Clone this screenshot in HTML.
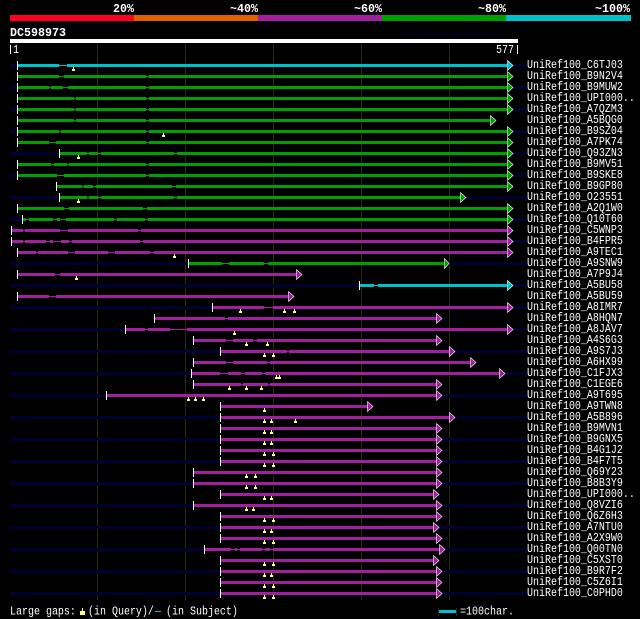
<!DOCTYPE html>
<html><head><meta charset="utf-8"><style>
html,body{margin:0;padding:0;background:#000;width:640px;height:619px;overflow:hidden}
svg{display:block}
text{font-family:"Liberation Mono","DejaVu Sans Mono",monospace;font-size:10px;fill:#fff;transform-box:fill-box;transform-origin:0 100%;transform:scaleY(1.2)}
.h{font-size:11.67px;font-weight:bold;transform:none}
.n{fill:none;stroke:#000033;stroke-width:3}
.w{fill:none;stroke:#fff;stroke-width:1}
.m{fill:#ffff80}
.tc,.bc{stroke:#00c0cc;fill:none}.tg,.bg{stroke:#00a000;fill:none}.tp,.bp{stroke:#a020a0;fill:none}
.tc,.tg,.tp{stroke-width:1}.bc,.bg,.bp{stroke-width:3}
.ac,.ag,.ap{stroke:#fff;stroke-width:.6}.ac{fill:#00c0cc}.ag{fill:#00a000}.ap{fill:#a020a0}
</style></head><body>
<svg width="640" height="619" viewBox="0 0 640 619" xmlns="http://www.w3.org/2000/svg">
<rect width="640" height="619" fill="#000"/>
<text class="h" x="113" y="12">20%</text>
<text class="h" x="230" y="12">~40%</text>
<text class="h" x="354" y="12">~60%</text>
<text class="h" x="478" y="12">~80%</text>
<text class="h" x="595" y="12">~100%</text>
<rect x="10" y="15" width="124" height="6" fill="#ff0022"/>
<rect x="134" y="15" width="124" height="6" fill="#e06000"/>
<rect x="258" y="15" width="124" height="6" fill="#a020a0"/>
<rect x="382" y="15" width="124" height="6" fill="#00a000"/>
<rect x="506" y="15" width="125" height="6" fill="#00c0cc"/>
<text class="h" x="10" y="36">DC598973</text>
<text class="h" x="402" y="37" style="font-size:8.3px;font-weight:normal;fill:#000033">AlignView.pm Beta rel.7</text>
<rect x="10" y="39" width="508" height="4" fill="#fff"/>
<rect x="10" y="45" width="1" height="9" fill="#fff"/>
<text x="13" y="53.500">1</text>
<text x="496" y="53.500">577</text>
<rect x="517" y="45" width="1" height="9" fill="#fff"/>
<path d="M97.5 44V600M185.5 44V600M273.5 44V600M361.5 44V600M449.5 44V600" stroke="#2a2a10" stroke-width="1" fill="none"/>

<g transform="translate(0,65)"><path class="n" d="M10 .5H17M513 .5H527"/><path class="tc" d="M18 .5H507"/><path class="bc" d="M18 .5H59M67 .5H507"/><path class="w" d="M17.500 -4V5"/><polygon class="ac" points="507.500,-4.500 507.500,5.500 513,.5"/><path class="m" d="M73 2h1v2h1v2h-3v-2h1z"/><text x="527" y="3.500">UniRef100_C6TJ03</text></g>
<g transform="translate(0,76)"><path class="tg" d="M18 .5H507"/><path class="bg" d="M18 .5H59M64 .5H146M149 .5H507"/><path class="w" d="M17.500 -4V5"/><polygon class="ag" points="507.500,-4.500 507.500,5.500 513,.5"/><text x="527" y="3.500">UniRef100_B9N2V4</text></g>
<g transform="translate(0,87)"><path class="n" d="M10 .5H17M513 .5H527"/><path class="tg" d="M18 .5H507"/><path class="bg" d="M18 .5H49M51 .5H63M68 .5H146M149 .5H507"/><path class="w" d="M17.500 -4V5"/><polygon class="ag" points="507.500,-4.500 507.500,5.500 513,.5"/><text x="527" y="3.500">UniRef100_B9MUW2</text></g>
<g transform="translate(0,98)"><path class="tg" d="M18 .5H507"/><path class="bg" d="M18 .5H74M76 .5H146M149 .5H507"/><path class="w" d="M17.500 -4V5"/><polygon class="ag" points="507.500,-4.500 507.500,5.500 513,.5"/><text x="527" y="3.500">UniRef100_UPI000..</text></g>
<g transform="translate(0,109)"><path class="n" d="M10 .5H17M513 .5H527"/><path class="tg" d="M18 .5H507"/><path class="bg" d="M18 .5H74M76 .5H146M149 .5H507"/><path class="w" d="M17.500 -4V5"/><polygon class="ag" points="507.500,-4.500 507.500,5.500 513,.5"/><text x="527" y="3.500">UniRef100_A7QZM3</text></g>
<g transform="translate(0,120)"><path class="tg" d="M18 .5H490"/><path class="bg" d="M18 .5H74M76 .5H146M149 .5H490"/><path class="w" d="M17.500 -4V5"/><polygon class="ag" points="490.500,-4.500 490.500,5.500 496,.5"/><text x="527" y="3.500">UniRef100_A5BQG0</text></g>
<g transform="translate(0,131)"><path class="n" d="M10 .5H17M513 .5H527"/><path class="tg" d="M18 .5H507"/><path class="bg" d="M18 .5H59M61 .5H146M149 .5H507"/><path class="w" d="M17.500 -4V5"/><polygon class="ag" points="507.500,-4.500 507.500,5.500 513,.5"/><path class="m" d="M163 2h1v2h1v2h-3v-2h1z"/><text x="527" y="3.500">UniRef100_B9SZ04</text></g>
<g transform="translate(0,142)"><path class="tg" d="M18 .5H507"/><path class="bg" d="M18 .5H49M56 .5H146M149 .5H507"/><path class="w" d="M17.500 -4V5"/><polygon class="ag" points="507.500,-4.500 507.500,5.500 513,.5"/><text x="527" y="3.500">UniRef100_A7PK74</text></g>
<g transform="translate(0,153)"><path class="n" d="M10 .5H59M513 .5H527"/><path class="tg" d="M60 .5H507"/><path class="bg" d="M60 .5H87M89 .5H98M101 .5H174M177 .5H507"/><path class="w" d="M59.500 -4V5"/><polygon class="ag" points="507.500,-4.500 507.500,5.500 513,.5"/><path class="m" d="M78 2h1v2h1v2h-3v-2h1z"/><text x="527" y="3.500">UniRef100_Q93ZN3</text></g>
<g transform="translate(0,164)"><path class="tg" d="M18 .5H507"/><path class="bg" d="M18 .5H51M54 .5H67M69 .5H146M149 .5H507"/><path class="w" d="M17.500 -4V5"/><polygon class="ag" points="507.500,-4.500 507.500,5.500 513,.5"/><text x="527" y="3.500">UniRef100_B9MV51</text></g>
<g transform="translate(0,175)"><path class="n" d="M10 .5H17M513 .5H527"/><path class="tg" d="M18 .5H507"/><path class="bg" d="M18 .5H57M64 .5H146M149 .5H507"/><path class="w" d="M17.500 -4V5"/><polygon class="ag" points="507.500,-4.500 507.500,5.500 513,.5"/><text x="527" y="3.500">UniRef100_B9SKE8</text></g>
<g transform="translate(0,186)"><path class="tg" d="M57 .5H507"/><path class="bg" d="M57 .5H82M84 .5H93M96 .5H172M176 .5H507"/><path class="w" d="M56.500 -4V5"/><polygon class="ag" points="507.500,-4.500 507.500,5.500 513,.5"/><text x="527" y="3.500">UniRef100_B9GP80</text></g>
<g transform="translate(0,197)"><path class="n" d="M10 .5H59M466 .5H527"/><path class="tg" d="M60 .5H461"/><path class="bg" d="M60 .5H87M89 .5H98M101 .5H174M177 .5H461"/><path class="w" d="M59.500 -4V5"/><polygon class="ag" points="460.500,-4.500 460.500,5.500 466,.5"/><path class="m" d="M78 2h1v2h1v2h-3v-2h1z"/><text x="527" y="3.500">UniRef100_O23551</text></g>
<g transform="translate(0,208)"><path class="tg" d="M18 .5H507"/><path class="bg" d="M18 .5H64M69 .5H143M147 .5H507"/><path class="w" d="M17.500 -4V5"/><polygon class="ag" points="507.500,-4.500 507.500,5.500 513,.5"/><text x="527" y="3.500">UniRef100_A2Q1W0</text></g>
<g transform="translate(0,219)"><path class="n" d="M10 .5H22M513 .5H527"/><path class="tg" d="M23 .5H507"/><path class="bg" d="M23 .5H26M29 .5H53M57 .5H60M66 .5H114M117 .5H145M148 .5H507"/><path class="w" d="M22.500 -4V5"/><polygon class="ag" points="507.500,-4.500 507.500,5.500 513,.5"/><text x="527" y="3.500">UniRef100_Q10T60</text></g>
<g transform="translate(0,230)"><path class="tp" d="M12 .5H507"/><path class="bp" d="M12 .5H23M25 .5H60M68 .5H138M141 .5H507"/><path class="w" d="M11.500 -4V5"/><polygon class="ap" points="507.500,-4.500 507.500,5.500 513,.5"/><text x="527" y="3.500">UniRef100_C5WNP3</text></g>
<g transform="translate(0,241)"><path class="n" d="M513 .5H527"/><path class="tp" d="M12 .5H507"/><path class="bp" d="M12 .5H23M25 .5H46M50 .5H53M61 .5H69M72 .5H140M143 .5H507"/><path class="w" d="M11.500 -4V5"/><polygon class="ap" points="507.500,-4.500 507.500,5.500 513,.5"/><text x="527" y="3.500">UniRef100_B4FPR5</text></g>
<g transform="translate(0,252)"><path class="tp" d="M18 .5H507"/><path class="bp" d="M18 .5H36M38 .5H68M75 .5H108M115 .5H150M154 .5H507"/><path class="w" d="M17.500 -4V5"/><polygon class="ap" points="507.500,-4.500 507.500,5.500 513,.5"/><path class="m" d="M174 2h1v2h1v2h-3v-2h1z"/><text x="527" y="3.500">UniRef100_A9TEC1</text></g>
<g transform="translate(0,263)"><path class="n" d="M10 .5H188M449 .5H527"/><path class="tg" d="M189 .5H444"/><path class="bg" d="M189 .5H222M229 .5H264M268 .5H444"/><path class="w" d="M188.500 -4V5"/><polygon class="ag" points="444.500,-4.500 444.500,5.500 449,.5"/><text x="527" y="3.500">UniRef100_A9SNW9</text></g>
<g transform="translate(0,274)"><path class="tp" d="M18 .5H296"/><path class="bp" d="M18 .5H55M60 .5H296"/><path class="w" d="M17.500 -4V5"/><polygon class="ap" points="296.500,-4.500 296.500,5.500 302,.5"/><path class="m" d="M76 2h1v2h1v2h-3v-2h1z"/><text x="527" y="3.500">UniRef100_A7P9J4</text></g>
<g transform="translate(0,285)"><path class="n" d="M10 .5H359M513 .5H527"/><path class="tc" d="M360 .5H507"/><path class="bc" d="M360 .5H374M378 .5H507"/><path class="w" d="M359.500 -4V5"/><polygon class="ac" points="507.500,-4.500 507.500,5.500 513,.5"/><text x="527" y="3.500">UniRef100_A5BU58</text></g>
<g transform="translate(0,296)"><path class="tp" d="M18 .5H288"/><path class="bp" d="M18 .5H49M56 .5H288"/><path class="w" d="M17.500 -4V5"/><polygon class="ap" points="288.500,-4.500 288.500,5.500 294,.5"/><text x="527" y="3.500">UniRef100_A5BU59</text></g>
<g transform="translate(0,307)"><path class="n" d="M10 .5H212M513 .5H527"/><path class="tp" d="M213 .5H507"/><path class="bp" d="M213 .5H264M273 .5H507"/><path class="w" d="M212.500 -4V5"/><polygon class="ap" points="507.500,-4.500 507.500,5.500 513,.5"/><path class="m" d="M240 2h1v2h1v2h-3v-2h1zM284 2h1v2h1v2h-3v-2h1zM294 2h1v2h1v2h-3v-2h1z"/><text x="527" y="3.500">UniRef100_A8IMR7</text></g>
<g transform="translate(0,318)"><path class="tp" d="M155 .5H437"/><path class="bp" d="M155 .5H225M228 .5H437"/><path class="w" d="M154.500 -4V5"/><polygon class="ap" points="436.500,-4.500 436.500,5.500 442,.5"/><text x="527" y="3.500">UniRef100_A8HQN7</text></g>
<g transform="translate(0,329)"><path class="n" d="M10 .5H125M513 .5H527"/><path class="tp" d="M126 .5H507"/><path class="bp" d="M126 .5H145M148 .5H170M187 .5H507"/><path class="w" d="M125.500 -4V5"/><polygon class="ap" points="507.500,-4.500 507.500,5.500 513,.5"/><path class="m" d="M234 2h1v2h1v2h-3v-2h1z"/><text x="527" y="3.500">UniRef100_A8JAV7</text></g>
<g transform="translate(0,340)"><path class="tp" d="M194 .5H437"/><path class="bp" d="M194 .5H226M233 .5H253M257 .5H437"/><path class="w" d="M193.500 -4V5"/><polygon class="ap" points="436.500,-4.500 436.500,5.500 442,.5"/><path class="m" d="M246 2h1v2h1v2h-3v-2h1zM267 2h1v2h1v2h-3v-2h1z"/><text x="527" y="3.500">UniRef100_A4S6G3</text></g>
<g transform="translate(0,351)"><path class="n" d="M10 .5H220M454 .5H527"/><path class="tp" d="M221 .5H449"/><path class="bp" d="M221 .5H287M289 .5H449"/><path class="w" d="M220.500 -4V5"/><polygon class="ap" points="449.500,-4.500 449.500,5.500 455,.5"/><path class="m" d="M264 2h1v2h1v2h-3v-2h1zM273 2h1v2h1v2h-3v-2h1z"/><text x="527" y="3.500">UniRef100_A9S7J3</text></g>
<g transform="translate(0,362)"><path class="tp" d="M194 .5H470"/><path class="bp" d="M194 .5H226M233 .5H267M270 .5H470"/><path class="w" d="M193.500 -4V5"/><polygon class="ap" points="470.500,-4.500 470.500,5.500 476,.5"/><text x="527" y="3.500">UniRef100_A6HX99</text></g>
<g transform="translate(0,373)"><path class="n" d="M10 .5H191M505 .5H527"/><path class="tp" d="M192 .5H500"/><path class="bp" d="M192 .5H220M228 .5H241M245 .5H262M265 .5H500"/><path class="w" d="M191.500 -4V5"/><polygon class="ap" points="499.500,-4.500 499.500,5.500 505,.5"/><path class="m" d="M276 2h1v2h1v2h-3v-2h1zM279 2h1v2h1v2h-3v-2h1z"/><text x="527" y="3.500">UniRef100_C1FJX3</text></g>
<g transform="translate(0,384)"><path class="tp" d="M194 .5H437"/><path class="bp" d="M194 .5H241M243 .5H268M270 .5H437"/><path class="w" d="M193.500 -4V5"/><polygon class="ap" points="436.500,-4.500 436.500,5.500 442,.5"/><path class="m" d="M229 2h1v2h1v2h-3v-2h1zM246 2h1v2h1v2h-3v-2h1zM261 2h1v2h1v2h-3v-2h1z"/><text x="527" y="3.500">UniRef100_C1EGE6</text></g>
<g transform="translate(0,395)"><path class="n" d="M10 .5H106M442 .5H527"/><path class="bp" d="M107 .5H437"/><path class="w" d="M106.500 -4V5"/><polygon class="ap" points="436.500,-4.500 436.500,5.500 442,.5"/><path class="m" d="M188 2h1v2h1v2h-3v-2h1zM195 2h1v2h1v2h-3v-2h1zM203 2h1v2h1v2h-3v-2h1z"/><text x="527" y="3.500">UniRef100_A9T695</text></g>
<g transform="translate(0,406)"><path class="bp" d="M221 .5H368"/><path class="w" d="M220.500 -4V5"/><polygon class="ap" points="367.500,-4.500 367.500,5.500 373,.5"/><path class="m" d="M264 2h1v2h1v2h-3v-2h1z"/><text x="527" y="3.500">UniRef100_A9TWN8</text></g>
<g transform="translate(0,417)"><path class="n" d="M10 .5H220M454 .5H527"/><path class="bp" d="M221 .5H449"/><path class="w" d="M220.500 -4V5"/><polygon class="ap" points="449.500,-4.500 449.500,5.500 455,.5"/><path class="m" d="M264 2h1v2h1v2h-3v-2h1zM271 2h1v2h1v2h-3v-2h1zM295 2h1v2h1v2h-3v-2h1z"/><text x="527" y="3.500">UniRef100_A5B896</text></g>
<g transform="translate(0,428)"><path class="bp" d="M221 .5H437"/><path class="w" d="M220.500 -4V5"/><polygon class="ap" points="436.500,-4.500 436.500,5.500 442,.5"/><path class="m" d="M264 2h1v2h1v2h-3v-2h1zM271 2h1v2h1v2h-3v-2h1z"/><text x="527" y="3.500">UniRef100_B9MVN1</text></g>
<g transform="translate(0,439)"><path class="n" d="M10 .5H220M442 .5H527"/><path class="bp" d="M221 .5H437"/><path class="w" d="M220.500 -4V5"/><polygon class="ap" points="436.500,-4.500 436.500,5.500 442,.5"/><path class="m" d="M264 2h1v2h1v2h-3v-2h1zM271 2h1v2h1v2h-3v-2h1z"/><text x="527" y="3.500">UniRef100_B9GNX5</text></g>
<g transform="translate(0,450)"><path class="bp" d="M221 .5H437"/><path class="w" d="M220.500 -4V5"/><polygon class="ap" points="436.500,-4.500 436.500,5.500 442,.5"/><path class="m" d="M264 2h1v2h1v2h-3v-2h1zM273 2h1v2h1v2h-3v-2h1z"/><text x="527" y="3.500">UniRef100_B4G1J2</text></g>
<g transform="translate(0,461)"><path class="n" d="M10 .5H220M442 .5H527"/><path class="bp" d="M221 .5H437"/><path class="w" d="M220.500 -4V5"/><polygon class="ap" points="436.500,-4.500 436.500,5.500 442,.5"/><path class="m" d="M264 2h1v2h1v2h-3v-2h1zM273 2h1v2h1v2h-3v-2h1z"/><text x="527" y="3.500">UniRef100_B4F7T5</text></g>
<g transform="translate(0,472)"><path class="bp" d="M194 .5H437"/><path class="w" d="M193.500 -4V5"/><polygon class="ap" points="436.500,-4.500 436.500,5.500 442,.5"/><path class="m" d="M246 2h1v2h1v2h-3v-2h1zM255 2h1v2h1v2h-3v-2h1z"/><text x="527" y="3.500">UniRef100_Q69Y23</text></g>
<g transform="translate(0,483)"><path class="n" d="M10 .5H193M442 .5H527"/><path class="bp" d="M194 .5H437"/><path class="w" d="M193.500 -4V5"/><polygon class="ap" points="436.500,-4.500 436.500,5.500 442,.5"/><path class="m" d="M246 2h1v2h1v2h-3v-2h1zM255 2h1v2h1v2h-3v-2h1z"/><text x="527" y="3.500">UniRef100_B8B3Y9</text></g>
<g transform="translate(0,494)"><path class="bp" d="M221 .5H433"/><path class="w" d="M220.500 -4V5"/><polygon class="ap" points="433.500,-4.500 433.500,5.500 439,.5"/><path class="m" d="M264 2h1v2h1v2h-3v-2h1zM271 2h1v2h1v2h-3v-2h1z"/><text x="527" y="3.500">UniRef100_UPI000..</text></g>
<g transform="translate(0,505)"><path class="n" d="M10 .5H193M442 .5H527"/><path class="bp" d="M194 .5H437"/><path class="w" d="M193.500 -4V5"/><polygon class="ap" points="436.500,-4.500 436.500,5.500 442,.5"/><path class="m" d="M246 2h1v2h1v2h-3v-2h1zM253 2h1v2h1v2h-3v-2h1z"/><text x="527" y="3.500">UniRef100_Q8VZI6</text></g>
<g transform="translate(0,516)"><path class="bp" d="M221 .5H437"/><path class="w" d="M220.500 -4V5"/><polygon class="ap" points="436.500,-4.500 436.500,5.500 442,.5"/><path class="m" d="M264 2h1v2h1v2h-3v-2h1zM273 2h1v2h1v2h-3v-2h1z"/><text x="527" y="3.500">UniRef100_Q6Z6H3</text></g>
<g transform="translate(0,527)"><path class="n" d="M10 .5H220M438 .5H527"/><path class="bp" d="M221 .5H433"/><path class="w" d="M220.500 -4V5"/><polygon class="ap" points="433.500,-4.500 433.500,5.500 439,.5"/><path class="m" d="M264 2h1v2h1v2h-3v-2h1zM271 2h1v2h1v2h-3v-2h1z"/><text x="527" y="3.500">UniRef100_A7NTU0</text></g>
<g transform="translate(0,538)"><path class="bp" d="M221 .5H437"/><path class="w" d="M220.500 -4V5"/><polygon class="ap" points="436.500,-4.500 436.500,5.500 442,.5"/><path class="m" d="M264 2h1v2h1v2h-3v-2h1zM273 2h1v2h1v2h-3v-2h1z"/><text x="527" y="3.500">UniRef100_A2X9W0</text></g>
<g transform="translate(0,549)"><path class="n" d="M10 .5H204M444 .5H527"/><path class="tp" d="M205 .5H440"/><path class="bp" d="M205 .5H231M235 .5H237M240 .5H262M265 .5H270M273 .5H440"/><path class="w" d="M204.500 -4V5"/><polygon class="ap" points="439.500,-4.500 439.500,5.500 445,.5"/><text x="527" y="3.500">UniRef100_Q00TN0</text></g>
<g transform="translate(0,560)"><path class="bp" d="M221 .5H433"/><path class="w" d="M220.500 -4V5"/><polygon class="ap" points="433.500,-4.500 433.500,5.500 439,.5"/><path class="m" d="M264 2h1v2h1v2h-3v-2h1zM273 2h1v2h1v2h-3v-2h1z"/><text x="527" y="3.500">UniRef100_C5XST0</text></g>
<g transform="translate(0,571)"><path class="n" d="M10 .5H220M442 .5H527"/><path class="bp" d="M221 .5H437"/><path class="w" d="M220.500 -4V5"/><polygon class="ap" points="436.500,-4.500 436.500,5.500 442,.5"/><path class="m" d="M264 2h1v2h1v2h-3v-2h1zM271 2h1v2h1v2h-3v-2h1z"/><text x="527" y="3.500">UniRef100_B9R7F2</text></g>
<g transform="translate(0,582)"><path class="bp" d="M221 .5H437"/><path class="w" d="M220.500 -4V5"/><polygon class="ap" points="436.500,-4.500 436.500,5.500 442,.5"/><path class="m" d="M264 2h1v2h1v2h-3v-2h1zM273 2h1v2h1v2h-3v-2h1z"/><text x="527" y="3.500">UniRef100_C5Z6I1</text></g>
<g transform="translate(0,593)"><path class="n" d="M10 .5H220M442 .5H527"/><path class="bp" d="M221 .5H437"/><path class="w" d="M220.500 -4V5"/><polygon class="ap" points="436.500,-4.500 436.500,5.500 442,.5"/><path class="m" d="M264 2h1v2h1v2h-3v-2h1zM273 2h1v2h1v2h-3v-2h1z"/><text x="527" y="3.500">UniRef100_C0PHD0</text></g>

<text x="10" y="615">Large gaps:</text>
<path class="m" d="M82 608h1v3h2v4h-5v-4h2z"/>
<text x="88" y="615">(in Query)/</text>
<rect x="155" y="611" width="6" height="1" fill="#00c0cc"/>
<text x="166" y="615">(in Subject)</text>
<rect x="438" y="608" width="1" height="8" fill="#2a2a10"/>
<rect x="456" y="608" width="1" height="8" fill="#2a2a10"/>
<rect x="439" y="610" width="17" height="3" fill="#00c0cc"/>
<text x="460" y="615">=100char.</text>
</svg>
</body></html>
